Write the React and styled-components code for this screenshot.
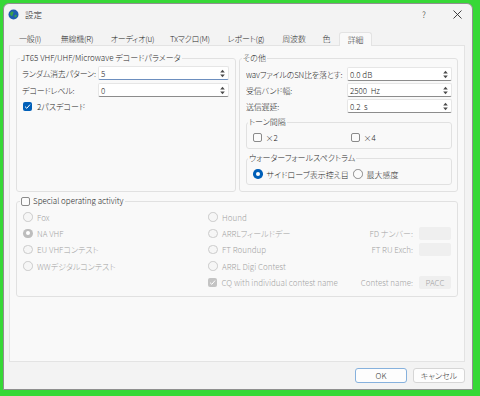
import React from 'react';
import styled, { createGlobalStyle, css } from 'styled-components';

const GlobalStyle = createGlobalStyle`
  html, body { margin: 0; padding: 0; }
  body {
    background: #37d837;
    font-family: "Noto Sans CJK JP", "Noto Sans", sans-serif;
    font-size: 8px;
    font-weight: 300;
    color: #1f1f1f;
    font-feature-settings: "palt";
  }
  * { box-sizing: border-box; }
`;

const Screen = styled.div`
  width: 480px;
  height: 396px;
  padding: 3px 7px 6px 3px;
  display: flex;
`;

const Window = styled.div`
  flex: 1;
  display: flex;
  flex-direction: column;
  background: #f3f3f3;
  border: 1px solid #8f8f8f;
  border-radius: 6px 6px 0 0;
  overflow: hidden;
`;

const TitleBar = styled.div`
  height: 20px;
  display: flex;
  align-items: center;
  padding-left: 4px;
`;

const TitleText = styled.span`
  margin-left: 6px;
  font-size: 8.5px;
`;

const TitleButtons = styled.div`
  margin-left: auto;
  display: flex;
  align-items: center;
`;

const HelpMark = styled.span`
  width: 20px;
  text-align: center;
  color: #333;
  margin-right: 13px;
  font-size: 8.5px;
`;

const CloseMark = styled.span`
  width: 20px;
  display: flex;
  justify-content: center;
  margin-right: 5px;
`;

const TabBar = styled.div`
  margin-top: 8px;
  height: 13px;
  display: flex;
  padding-left: 5px;
  position: relative;
  z-index: 1;
`;

const Tab = styled.div`
  width: ${(p) => p.$w}px;
  height: 13px;
  display: flex;
  align-items: center;
  justify-content: center;
  white-space: nowrap;
  letter-spacing: -0.2px;
  color: #2a2a2a;
  ${(p) =>
    p.$active &&
    css`
      background: #f9f9f9;
      border: 1px solid #e3e3e3;
      border-bottom: none;
      border-radius: 3px 3px 0 0;
      height: 14px;
      margin-bottom: -1px;
    `}
`;

const Panel = styled.div`
  flex: 1;
  margin: 0 7px 0 5px;
  background: #f9f9f9;
  border: 1px solid #e3e3e3;
  padding: 7px 6px 0 6px;
  display: flex;
  flex-direction: column;
`;

const TopRow = styled.div`
  display: flex;
  gap: 3px;
`;

const Group = styled.fieldset`
  margin: 0;
  min-width: 0;
  padding: 0;
  border: 1px solid #e1e1e1;
  border-radius: 3px;
  width: ${(p) => (p.$w ? `${p.$w}px` : 'auto')};
  margin-top: ${(p) => p.$mt || 0}px;
`;

const GroupBody = styled.div`
  padding: ${(p) => p.$pad || '0'};
`;

const Legend = styled.legend`
  padding: 0 1px;
  margin-left: ${(p) => p.$ml ?? 3}px;
  line-height: 10px;
  height: 10px;
  white-space: nowrap;
  display: flex;
  align-items: center;
  gap: 3px;
`;

const FieldRow = styled.div`
  display: flex;
  align-items: center;
  height: 14px;
  margin-top: ${(p) => p.$mt || 0}px;
`;

const FieldLabel = styled.span`
  width: ${(p) => p.$w}px;
  flex-shrink: 0;
  white-space: nowrap;
  letter-spacing: -0.2px;
  overflow: hidden;
`;

const SpinBox = styled.div`
  flex: 1;
  height: 14px;
  display: flex;
  align-items: center;
  background: #ffffff;
  border: 1px solid #e6e6e6;
  border-bottom-color: ${(p) => (p.$focus ? '#6d8fbf' : '#8c8c8c')};
  border-radius: 2px;
  padding: 0 3px 0 2px;
`;

const SpinValue = styled.span`
  flex: 1;
  white-space: pre;
`;

const CheckRow = styled.label`
  display: flex;
  align-items: center;
  gap: ${(p) => p.$gap ?? 4}px;
  height: 14px;
  white-space: nowrap;
  margin-left: ${(p) => p.$ml || 0}px;
  margin-top: ${(p) => p.$mt || 0}px;
  color: ${(p) => (p.$disabled ? '#a3a3a3' : 'inherit')};
`;

const Box = styled.span`
  width: 9px;
  height: 9px;
  flex-shrink: 0;
  border-radius: 2px;
  display: flex;
  align-items: center;
  justify-content: center;
  ${(p) =>
    p.$checked
      ? css`
          background: ${p.$disabled ? '#c4c4c4' : '#005fb8'};
        `
      : css`
          background: ${p.$disabled ? '#f6f6f6' : '#fbfbfb'};
          border: 1px solid ${p.$disabled ? '#cccccc' : '#8a8a8a'};
        `}
`;

const Round = styled.span`
  width: 9.5px;
  height: 9.5px;
  flex-shrink: 0;
  border-radius: 50%;
  display: flex;
  align-items: center;
  justify-content: center;
  ${(p) =>
    p.$checked
      ? css`
          background: ${p.$disabled ? '#bdbdbd' : '#005fb8'};
          &::after {
            content: '';
            width: 4px;
            height: 4px;
            border-radius: 50%;
            background: #ffffff;
          }
        `
      : css`
          background: ${p.$disabled ? '#f6f6f6' : '#fbfbfb'};
          border: 1px solid ${p.$disabled ? '#cbcbcb' : '#8a8a8a'};
        `}
`;

const OptionGrid = styled.div`
  display: grid;
  grid-template-columns: ${(p) => p.$cols};
  align-items: center;
  padding: ${(p) => p.$pad};
`;

const SpecialGrid = styled.div`
  display: grid;
  grid-template-columns: 185px 1fr auto 32px;
  grid-auto-rows: 16.3px;
  align-items: center;
  padding: 3px 6px 6px 6px;
`;

const SideLabel = styled.span`
  justify-self: end;
  margin-right: 6px;
  color: #a3a3a3;
  white-space: nowrap;
`;

const FlatInput = styled.span`
  height: 13px;
  background: #efefef;
  border-radius: 2px;
  color: #a3a3a3;
  display: flex;
  align-items: center;
  justify-content: center;
`;

const ButtonBar = styled.div`
  height: 27px;
  display: flex;
  justify-content: flex-end;
  align-items: flex-start;
  gap: 6px;
  padding: 6px 7px 0 0;
`;

const DialogButton = styled.button`
  width: 52px;
  height: 15px;
  padding: 0;
  font: inherit;
  color: #333;
  background: #fdfdfd;
  border: 1px solid ${(p) => (p.$primary ? '#86b1dd' : '#d6d6d6')};
  border-radius: 3px;
`;

const Check = ({ color = '#fff' }) => (
  <svg width="7" height="7" viewBox="0 0 7 7">
    <path d="M1 3.6 L2.8 5.3 L6 1.6" fill="none" stroke={color} strokeWidth="1" />
  </svg>
);

const SpinArrows = () => (
  <svg width="5" height="9" viewBox="0 0 5 9">
    <path d="M0.2 3.6 L2.5 0.8 L4.8 3.6 Z" fill="#4a4a4a" />
    <path d="M0.2 5.4 L2.5 8.2 L4.8 5.4 Z" fill="#4a4a4a" />
  </svg>
);

const AppIcon = () => (
  <svg width="11" height="11" viewBox="0 0 11 11">
    <circle cx="5.5" cy="5.5" r="5" fill="#1f5fae" />
    <path d="M2.5 3.5 C3.5 2 5 2.2 5.5 3 C6 4 4.5 4.5 4.8 5.8 C5 7 3.2 7.4 2.6 6.2 C2 5 1.8 4.5 2.5 3.5 Z" fill="#3aa34a" />
    <path d="M7 6 C8 5.5 9 6.2 8.6 7.4 C8.2 8.4 7 8.6 6.6 7.8 C6.3 7 6.4 6.4 7 6 Z" fill="#3aa34a" />
  </svg>
);

const CloseIcon = () => (
  <svg width="9" height="9" viewBox="0 0 9 9">
    <path d="M0.5 0.5 L8.5 8.5 M8.5 0.5 L0.5 8.5" stroke="#2b2b2b" strokeWidth="0.9" />
  </svg>
);

const CheckBox = ({ checked, disabled }) => (
  <Box $checked={checked} $disabled={disabled}>
    {checked && <Check />}
  </Box>
);

const Spin = ({ value, focus }) => (
  <SpinBox $focus={focus}>
    <SpinValue>{value}</SpinValue>
    <SpinArrows />
  </SpinBox>
);

const tabs = [
  { label: '一般(I)', w: 42 },
  { label: '無線機(R)', w: 52 },
  { label: 'オーディオ(u)', w: 59 },
  { label: 'Txマクロ(M)', w: 56 },
  { label: 'レポート(g)', w: 56 },
  { label: '周波数', w: 40 },
  { label: '色', w: 25 },
  { label: '詳細', w: 33, active: true },
];

const Opt = ({ label, checked }) => (
  <CheckRow $disabled $gap={4.5}>
    <Round $disabled $checked={checked} />
    {label}
  </CheckRow>
);

export default function App() {
  return (
    <>
      <GlobalStyle />
      <Screen>
        <Window>
          <TitleBar>
            <AppIcon />
            <TitleText>設定</TitleText>
            <TitleButtons>
              <HelpMark>?</HelpMark>
              <CloseMark>
                <CloseIcon />
              </CloseMark>
            </TitleButtons>
          </TitleBar>
          <TabBar>
            {tabs.map((t) => (
              <Tab key={t.label} $w={t.w} $active={t.active}>
                {t.label}
              </Tab>
            ))}
          </TabBar>
          <Panel>
            <TopRow>
              <Group $w={220}>
                <Legend $ml={3}>JT65 VHF/UHF/Microwave デコードパラメータ</Legend>
                <GroupBody $pad="3px 6px 0 5px">
                  <FieldRow>
                    <FieldLabel $w={76}>ランダム消去パターン:</FieldLabel>
                    <Spin value="5" focus />
                  </FieldRow>
                  <FieldRow $mt={3}>
                    <FieldLabel $w={76}>デコードレベル:</FieldLabel>
                    <Spin value="0" />
                  </FieldRow>
                  <CheckRow $ml={1} $mt={2} $gap={5}>
                    <CheckBox checked />
                    2パスデコード
                  </CheckRow>
                </GroupBody>
              </Group>
              <Group $w={219}>
                <Legend $ml={2}>その他</Legend>
                <GroupBody $pad="4px 5px 6px 6px">
                  <FieldRow>
                    <FieldLabel $w={101}>wavファイルのSN比を落とす:</FieldLabel>
                    <Spin value="0.0 dB" />
                  </FieldRow>
                  <FieldRow $mt={2}>
                    <FieldLabel $w={101}>受信バンド幅:</FieldLabel>
                    <Spin value="2500  Hz" />
                  </FieldRow>
                  <FieldRow $mt={2}>
                    <FieldLabel $w={101}>送信遅延:</FieldLabel>
                    <Spin value="0.2  s" />
                  </FieldRow>
                  <Group $mt={4}>
                    <Legend $ml={1}>トーン間隔</Legend>
                    <OptionGrid $cols="98px auto" $pad="3px 0 4px 6px">
                      <CheckRow $gap={3.5}>
                        <CheckBox />
                        ×2
                      </CheckRow>
                      <CheckRow $gap={3.5}>
                        <CheckBox />
                        ×4
                      </CheckRow>
                    </OptionGrid>
                  </Group>
                  <Group $mt={4}>
                    <Legend $ml={1}>ウォーターフォールスペクトラム</Legend>
                    <OptionGrid $cols="100px auto" $pad="4px 0 3px 6px">
                      <CheckRow $gap={4}>
                        <Round $checked />
                        サイドローブ表示控え目
                      </CheckRow>
                      <CheckRow $gap={4}>
                        <Round />
                        最大感度
                      </CheckRow>
                    </OptionGrid>
                  </Group>
                </GroupBody>
              </Group>
            </TopRow>
            <Group $mt={4}>
              <Legend $ml={3}>
                <CheckBox />
                Special operating activity
              </Legend>
              <SpecialGrid>
                <Opt label="Fox" />
                <Opt label="Hound" />
                <span />
                <span />
                <Opt label="NA VHF" checked />
                <Opt label="ARRLフィールドデー" />
                <SideLabel>FD ナンバー:</SideLabel>
                <FlatInput />
                <Opt label="EU VHFコンテスト" />
                <Opt label="FT Roundup" />
                <SideLabel>FT RU Exch:</SideLabel>
                <FlatInput />
                <Opt label="WWデジタルコンテスト" />
                <Opt label="ARRL Digi Contest" />
                <span />
                <span />
                <span />
                <CheckRow $disabled $gap={4.5}>
                  <CheckBox checked disabled />
                  CQ with individual contest name
                </CheckRow>
                <SideLabel>Contest name:</SideLabel>
                <FlatInput>PACC</FlatInput>
              </SpecialGrid>
            </Group>
          </Panel>
          <ButtonBar>
            <DialogButton $primary>OK</DialogButton>
            <DialogButton>キャンセル</DialogButton>
          </ButtonBar>
        </Window>
      </Screen>
    </>
  );
}
